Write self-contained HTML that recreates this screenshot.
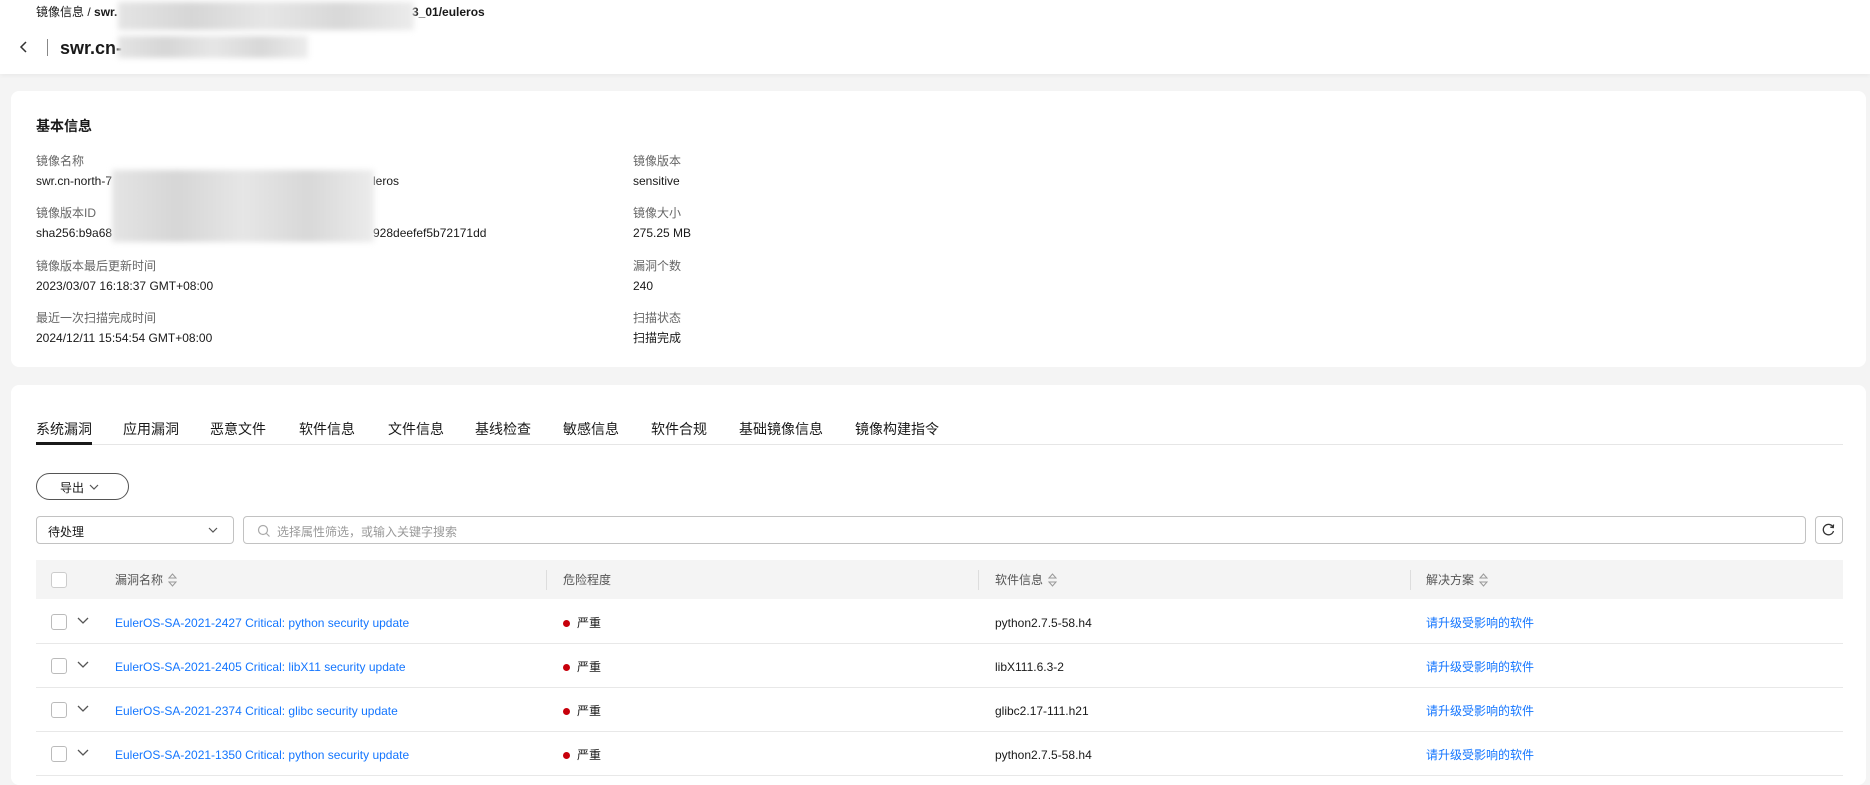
<!DOCTYPE html>
<html><head><meta charset="utf-8"><style>
*{box-sizing:border-box;margin:0;padding:0}
body{width:1870px;height:776px;overflow:hidden;background:#f4f4f4;font-family:"Liberation Sans","Noto Sans CJK SC",sans-serif;color:#191919;font-size:12px;position:relative}
.a{position:absolute;white-space:nowrap;line-height:16px}
.hdr{position:absolute;left:0;top:0;width:1870px;height:74px;background:#fff;box-shadow:0 2px 4px rgba(0,0,0,.04)}
.blur{position:absolute;background:linear-gradient(90deg,#e4e4e4,#d6d6d6,#e6e6e6,#d8d8d8,#ececec);filter:blur(3px)}
.card{position:absolute;left:11px;width:1855px;background:#fff;border-radius:8px}
.lbl{color:#666}
.tab{position:absolute;top:420px;font-size:14px;line-height:18px;color:#191919;white-space:nowrap}
.th{position:absolute;top:572px;color:#555;font-size:12px;line-height:16px;white-space:nowrap}
.sep{position:absolute;top:570px;width:1px;height:20px;background:#ddd}
.row{position:absolute;left:36px;width:1807px;height:1px;background:#e8e8e8}
.cb{position:absolute;left:51px;width:16px;height:16px;border:1px solid #bbb;border-radius:3px;background:#fff}
.link{color:#1476ff}
.dot{display:inline-block;width:7px;height:7px;border-radius:50%;background:#c7000b;margin-right:7px;vertical-align:0px}
.sort{display:inline-block;vertical-align:-3px;margin-left:5px}
</style></head><body>
<div class="hdr"></div>
<div class="a" style="left:36px;top:4px;font-size:12px">镜像信息 / <b>swr.</b></div>
<div class="a" style="left:412px;top:4px;font-size:12px;font-weight:bold">3_01/euleros</div>
<div class="blur" style="left:118px;top:2px;width:296px;height:28px"></div>
<svg class="a" style="left:18px;top:40px" width="12" height="14" viewBox="0 0 12 14"><path d="M8 2 L3 7 L8 12" fill="none" stroke="#333" stroke-width="1.5"/></svg>
<div class="a" style="left:47px;top:39px;width:1px;height:17px;background:#888"></div>
<div class="a" style="left:60px;top:37px;font-size:18px;line-height:22px;font-weight:bold">swr.cn-</div>
<div class="blur" style="left:118px;top:36px;width:190px;height:22px"></div>

<div class="card" style="top:91px;height:276px"></div>
<div class="a" style="left:36px;top:117px;font-size:14px;line-height:18px;font-weight:bold">基本信息</div>
<div class="a lbl" style="left:36px;top:153px">镜像名称</div>
<div class="a" style="left:36px;top:173px">swr.cn-north-7</div>
<div class="a" style="left:373px;top:173px">leros</div>
<div class="a lbl" style="left:36px;top:205px">镜像版本ID</div>
<div class="a" style="left:36px;top:225px">sha256:b9a68</div>
<div class="a" style="left:373px;top:225px">928deefef5b72171dd</div>
<div class="blur" style="left:112px;top:170px;width:262px;height:72px"></div>
<div class="a lbl" style="left:36px;top:258px">镜像版本最后更新时间</div>
<div class="a" style="left:36px;top:278px">2023/03/07 16:18:37 GMT+08:00</div>
<div class="a lbl" style="left:36px;top:310px">最近一次扫描完成时间</div>
<div class="a" style="left:36px;top:330px">2024/12/11 15:54:54 GMT+08:00</div>
<div class="a lbl" style="left:633px;top:153px">镜像版本</div>
<div class="a" style="left:633px;top:173px">sensitive</div>
<div class="a lbl" style="left:633px;top:205px">镜像大小</div>
<div class="a" style="left:633px;top:225px">275.25 MB</div>
<div class="a lbl" style="left:633px;top:258px">漏洞个数</div>
<div class="a" style="left:633px;top:278px">240</div>
<div class="a lbl" style="left:633px;top:310px">扫描状态</div>
<div class="a" style="left:633px;top:330px">扫描完成</div>

<div class="card" style="top:385px;height:400px"></div>
<div class="tab" style="left:36px">系统漏洞</div>
<div class="tab" style="left:123px">应用漏洞</div>
<div class="tab" style="left:210px">恶意文件</div>
<div class="tab" style="left:299px">软件信息</div>
<div class="tab" style="left:388px">文件信息</div>
<div class="tab" style="left:475px">基线检查</div>
<div class="tab" style="left:563px">敏感信息</div>
<div class="tab" style="left:651px">软件合规</div>
<div class="tab" style="left:739px">基础镜像信息</div>
<div class="tab" style="left:855px">镜像构建指令</div>
<div class="a" style="left:36px;top:444px;width:1807px;height:1px;background:#e6e6e6"></div>
<div class="a" style="left:36px;top:442px;width:56px;height:3px;background:#191919"></div>

<div class="a" style="left:36px;top:473px;width:93px;height:27px;border:1px solid #555;border-radius:14px"></div>
<div class="a" style="left:60px;top:480px;font-size:12px">导出</div>
<svg class="a" style="left:89px;top:484px" width="10" height="7"><path d="M1 1 L5 5 L9 1" fill="none" stroke="#555" stroke-width="1.2"/></svg>

<div class="a" style="left:36px;top:516px;width:198px;height:28px;border:1px solid #c2c2c2;border-radius:4px"></div>
<div class="a" style="left:48px;top:524px">待处理</div>
<svg class="a" style="left:208px;top:527px" width="10" height="7"><path d="M1 1 L5 5 L9 1" fill="none" stroke="#555" stroke-width="1.2"/></svg>
<div class="a" style="left:243px;top:516px;width:1563px;height:28px;border:1px solid #c2c2c2;border-radius:4px"></div>
<svg class="a" style="left:257px;top:524px" width="14" height="14"><circle cx="6" cy="6" r="4.5" fill="none" stroke="#aaa" stroke-width="1.2"/><path d="M9.5 9.5 L12.5 12.5" stroke="#aaa" stroke-width="1.2"/></svg>
<div class="a" style="left:277px;top:524px;color:#999">选择属性筛选，或输入关键字搜索</div>
<div class="a" style="left:1815px;top:516px;width:28px;height:28px;border:1px solid #c2c2c2;border-radius:4px"></div>
<svg class="a" style="left:1821px;top:522px" width="16" height="16"><path d="M12 5 A5.2 5.2 0 1 0 12.5 9" fill="none" stroke="#333" stroke-width="1.3"/><path d="M12.5 2.5 L12.3 5.5 L9.3 5.2" fill="none" stroke="#333" stroke-width="1.3"/></svg>

<div class="a" style="left:36px;top:560px;width:1807px;height:39px;background:#f4f4f4"></div>
<div class="cb" style="top:572px;border-color:#ccc"></div>
<div class="th" style="left:115px">漏洞名称<svg class="sort" width="9" height="14"><path d="M1 5 L4.5 1 L8 5 Z M1 9 L4.5 13 L8 9 Z" fill="none" stroke="#999"/></svg></div>
<div class="sep" style="left:546px"></div>
<div class="th" style="left:563px">危险程度</div>
<div class="sep" style="left:978px"></div>
<div class="th" style="left:995px">软件信息<svg class="sort" width="9" height="14"><path d="M1 5 L4.5 1 L8 5 Z M1 9 L4.5 13 L8 9 Z" fill="none" stroke="#999"/></svg></div>
<div class="sep" style="left:1410px"></div>
<div class="th" style="left:1426px">解决方案<svg class="sort" width="9" height="14"><path d="M1 5 L4.5 1 L8 5 Z M1 9 L4.5 13 L8 9 Z" fill="none" stroke="#999"/></svg></div>

<div class="cb" style="top:614px"></div><svg class="a" style="left:77px;top:617px" width="12" height="8"><path d="M1 1 L6 6 L11 1" fill="none" stroke="#555" stroke-width="1.3"/></svg>
<div class="a link" style="left:115px;top:615px">EulerOS-SA-2021-2427 Critical: python security update</div>
<div class="a" style="left:563px;top:615px"><span class="dot"></span>严重</div>
<div class="a" style="left:995px;top:615px">python2.7.5-58.h4</div>
<div class="a link" style="left:1426px;top:615px">请升级受影响的软件</div>
<div class="row" style="top:643px"></div>

<div class="cb" style="top:658px"></div><svg class="a" style="left:77px;top:661px" width="12" height="8"><path d="M1 1 L6 6 L11 1" fill="none" stroke="#555" stroke-width="1.3"/></svg>
<div class="a link" style="left:115px;top:659px">EulerOS-SA-2021-2405 Critical: libX11 security update</div>
<div class="a" style="left:563px;top:659px"><span class="dot"></span>严重</div>
<div class="a" style="left:995px;top:659px">libX111.6.3-2</div>
<div class="a link" style="left:1426px;top:659px">请升级受影响的软件</div>
<div class="row" style="top:687px"></div>

<div class="cb" style="top:702px"></div><svg class="a" style="left:77px;top:705px" width="12" height="8"><path d="M1 1 L6 6 L11 1" fill="none" stroke="#555" stroke-width="1.3"/></svg>
<div class="a link" style="left:115px;top:703px">EulerOS-SA-2021-2374 Critical: glibc security update</div>
<div class="a" style="left:563px;top:703px"><span class="dot"></span>严重</div>
<div class="a" style="left:995px;top:703px">glibc2.17-111.h21</div>
<div class="a link" style="left:1426px;top:703px">请升级受影响的软件</div>
<div class="row" style="top:731px"></div>

<div class="cb" style="top:746px"></div><svg class="a" style="left:77px;top:749px" width="12" height="8"><path d="M1 1 L6 6 L11 1" fill="none" stroke="#555" stroke-width="1.3"/></svg>
<div class="a link" style="left:115px;top:747px">EulerOS-SA-2021-1350 Critical: python security update</div>
<div class="a" style="left:563px;top:747px"><span class="dot"></span>严重</div>
<div class="a" style="left:995px;top:747px">python2.7.5-58.h4</div>
<div class="a link" style="left:1426px;top:747px">请升级受影响的软件</div>
<div class="row" style="top:775px"></div>
</body></html>
